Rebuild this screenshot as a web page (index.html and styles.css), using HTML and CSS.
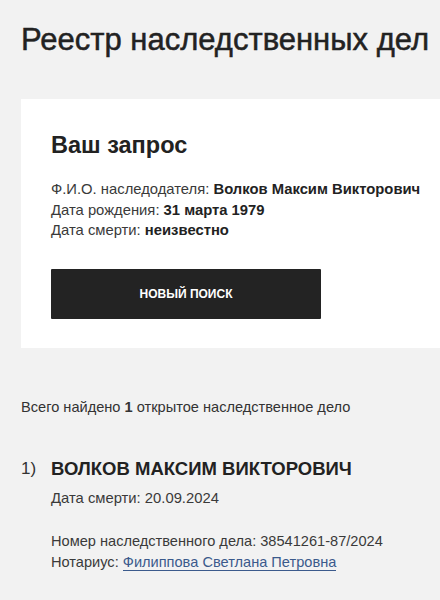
FILE: index.html
```html
<!DOCTYPE html>
<html lang="ru">
<head>
<meta charset="utf-8">
<link rel="stylesheet" href="styles.css">
</head>
<body>
<div class="page">
  <h1 class="title">Реестр наследственных дел</h1>
  <section class="card">
    <h2 class="card-title">Ваш запрос</h2>
    <div class="info">
      <div>Ф.И.О. наследодателя: <b>Волков Максим Викторович</b></div>
      <div>Дата рождения: <b>31 марта 1979</b></div>
      <div>Дата смерти: <b>неизвестно</b></div>
    </div>
    <button class="btn">НОВЫЙ ПОИСК</button>
  </section>
  <p class="total">Всего найдено <b>1</b> открытое наследственное дело</p>
  <div class="result">
    <div class="num">1)</div>
    <div class="body">
      <div class="name">ВОЛКОВ МАКСИМ ВИКТОРОВИЧ</div>
      <div class="line">Дата смерти: 20.09.2024</div>
      <div class="details">
        <div>Номер наследственного дела: 38541261-87/2024</div>
        <div>Нотариус: <a class="link" href="#">Филиппова Светлана Петровна</a></div>
      </div>
    </div>
  </div>
</div>
</body>
</html>
```

FILE: styles.css
```css
html, body {
  margin: 0;
  padding: 0;
  background: #f2f2f2;
  overflow: hidden;
}
body {
  font-family: "Liberation Sans", Arial, sans-serif;
  color: #222;
}
.page {
  padding: 22px 0 0 21px;
  width: 560px;
}
.title {
  margin: 0;
  font-size: 31px;
  font-weight: normal;
  line-height: 36px;
  color: #222;
  -webkit-text-stroke: 0.5px #222;
}
.card {
  margin-top: 41px;
  background: #fff;
  padding: 31px 30px 29px 30px;
  height: 189px;
}
.card-title {
  margin: 0;
  font-size: 23.5px;
  font-weight: bold;
  line-height: 30px;
}
.info {
  margin-top: 19px;
  font-size: 14.8px;
  line-height: 20.5px;
  color: #3a3a3a;
}
.info b {
  color: #222;
}
.btn {
  margin-top: 28px;
  width: 270px;
  height: 50px;
  border: none;
  border-radius: 1px;
  background: #232323;
  color: #fff;
  font-family: "Liberation Sans", Arial, sans-serif;
  font-weight: bold;
  font-size: 12px;
  display: block;
}
.total {
  margin: 50px 0 0 0;
  font-size: 14.6px;
  line-height: 18px;
  color: #333;
}
.result {
  margin-top: 42px;
  display: flex;
}
.num {
  width: 30px;
  font-size: 17px;
  line-height: 22px;
  color: #333;
}
.name {
  font-size: 18.5px;
  font-weight: bold;
  line-height: 22px;
  color: #222;
}
.line {
  margin-top: 8px;
  font-size: 14.8px;
  line-height: 20px;
  color: #3a3a3a;
}
.details {
  margin-top: 23px;
  font-size: 14.6px;
  line-height: 20.5px;
  color: #3a3a3a;
}
.link {
  color: #3b5a8c;
  text-decoration: none;
  border-bottom: 1px solid #3b5a8c;
}
```
